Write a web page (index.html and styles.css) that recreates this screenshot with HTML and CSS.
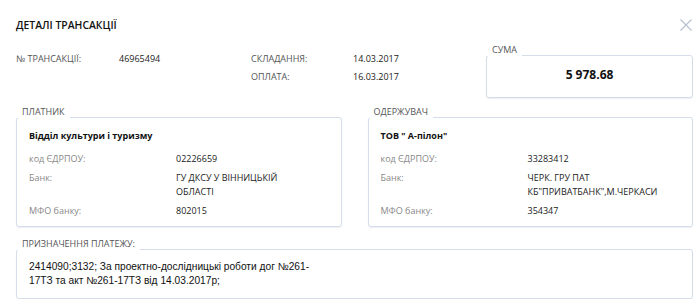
FILE: index.html
```html
<!DOCTYPE html>
<html lang="uk">
<head>
    <meta charset="UTF-8">
    <meta name="viewport" content="width=device-width, initial-scale=1.0">
    <title>Деталі трансакції</title>
    <link rel="stylesheet" href="styles.css">
</head>
<body>
    <div class="modal">
        <div class="modal-header">
            <h1>ДЕТАЛІ ТРАНСАКЦІЇ</h1>
            <span class="close">
                <svg width="12" height="12" viewBox="0 0 12 12">
                    <path d="M0.5 0.5 L11.5 11.5 M11.5 0.5 L0.5 11.5" stroke="#b9c1cf" stroke-width="1.2" fill="none"/>
                </svg>
            </span>
        </div>

        <div class="summary">
            <div class="info">
                <span class="info-label">№ ТРАНСАКЦІЇ:</span>
                <span class="info-value">46965494</span>
                <span class="info-label">СКЛАДАННЯ:</span>
                <span class="info-value">14.03.2017</span>
                <span></span>
                <span></span>
                <span class="info-label">ОПЛАТА:</span>
                <span class="info-value">16.03.2017</span>
            </div>
            <div class="box amount-box">
                <span class="box-title">СУМА</span>
                <div class="amount">5 978.68</div>
            </div>
        </div>

        <div class="parties">
            <div class="box party">
                <span class="box-title">ПЛАТНИК</span>
                <div class="party-name">Відділ культури і туризму</div>
                <div class="rows">
                    <span class="row-label">код ЄДРПОУ:</span>
                    <span class="row-value">02226659</span>
                    <span class="row-label">Банк:</span>
                    <span class="row-value">ГУ ДКСУ У ВІННИЦЬКІЙ<br>ОБЛАСТІ</span>
                    <span class="row-label">МФО банку:</span>
                    <span class="row-value">802015</span>
                </div>
            </div>
            <div class="box party">
                <span class="box-title">ОДЕРЖУВАЧ</span>
                <div class="party-name">ТОВ " А-пілон"</div>
                <div class="rows">
                    <span class="row-label">код ЄДРПОУ:</span>
                    <span class="row-value">33283412</span>
                    <span class="row-label">Банк:</span>
                    <span class="row-value">ЧЕРК. ГРУ ПАТ<br>КБ"ПРИВАТБАНК",М.ЧЕРКАСИ</span>
                    <span class="row-label">МФО банку:</span>
                    <span class="row-value">354347</span>
                </div>
            </div>
        </div>

        <div class="box purpose">
            <span class="box-title">ПРИЗНАЧЕННЯ ПЛАТЕЖУ:</span>
            <p>2414090;3132; За проектно-дослідницькі роботи дог №261-17ТЗ та акт №261-17ТЗ від 14.03.2017р;</p>
        </div>
    </div>
</body>
</html>
```

FILE: styles.css
```css
body {
    margin: 0;
    padding: 0;
    background-color: #ffffff;
    font-family: "Open Sans", Arial, sans-serif;
    color: #222;
}
.modal {
    padding: 0 7px 0 16px;
}
.modal-header {
    display: flex;
    justify-content: space-between;
    align-items: center;
    padding-top: 17px;
}
h1 {
    margin: 0;
    font-size: 10.4px;
    line-height: 16px;
    font-weight: 600;
    color: #111;
}
.close {
    display: flex;
    margin-right: 1px;
}
.summary {
    display: flex;
    justify-content: space-between;
    align-items: flex-start;
}
.info {
    display: grid;
    grid-template-columns: 103px 132px 102px 100px;
    grid-auto-rows: 18px;
    align-items: center;
    margin-top: 16px;
    font-size: 9px;
}
.info-label {
    color: #555;
}
.info-value {
    color: #222;
}
.box {
    position: relative;
    border: 1px solid #d5dcea;
    border-radius: 3px;
    box-shadow: 0 1px 1px rgba(180, 190, 210, 0.25);
}
.box-title {
    position: absolute;
    top: -12px;
    left: -1px;
    padding: 0 5px 0 6px;
    background-color: #ffffff;
    font-size: 9px;
    line-height: 12px;
    color: #555;
}
.amount-box {
    width: 205px;
    height: 41px;
    margin-top: 22px;
}
.amount {
    text-align: center;
    font-size: 12px;
    font-weight: 700;
    line-height: 16px;
    padding-top: 11px;
    color: #111;
}
.parties {
    display: flex;
    gap: 26px;
    margin-top: 19px;
}
.party {
    flex: 1;
    padding: 10px 12px 8px 12px;
}
.party-name {
    font-size: 9px;
    font-weight: 700;
    line-height: 16px;
    color: #111;
    margin-bottom: 8px;
}
.rows {
    display: grid;
    grid-template-columns: 147px 1fr;
    row-gap: 5px;
    font-size: 9px;
    line-height: 14px;
}
.row-label {
    color: #888;
}
.row-value {
    color: #222;
}
.purpose {
    margin-top: 22px;
    padding: 10px 12px 10px 12px;
}
.purpose p {
    margin: 0;
    width: 290px;
    font-family: "Liberation Sans", Arial, sans-serif;
    font-size: 10.2px;
    line-height: 14px;
    color: #111;
}
```
